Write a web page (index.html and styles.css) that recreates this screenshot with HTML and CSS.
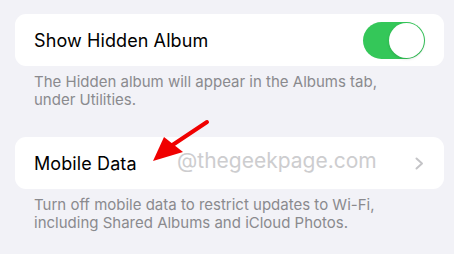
FILE: index.html
```html
<!DOCTYPE html>
<html>
<head>
<meta charset="utf-8">
<link rel="stylesheet" href="styles.css">
</head>
<body>
<div class="page">
  <div class="card">
    <span class="label">Show Hidden Album</span>
    <div class="toggle"><div class="knob"></div></div>
  </div>
  <p class="caption">The Hidden album will appear in the Albums tab,<br>under Utilities.</p>
  <div class="card card-link">
    <span class="label">Mobile Data</span>
    <span class="watermark">@thegeekpage.com</span>
    <svg class="chevron" width="9" height="13" viewBox="0 0 9 13"><path d="M1.5 1.5 L7 6.5 L1.5 11.5" fill="none" stroke="#c4c4c7" stroke-width="2" stroke-linecap="round" stroke-linejoin="round"/></svg>
  </div>
  <p class="caption">Turn off mobile data to restrict updates to Wi-Fi,<br>including Shared Albums and iCloud Photos.</p>
</div>
<svg class="arrow" width="454" height="254" viewBox="0 0 454 254">
  <line x1="207" y1="122" x2="168" y2="148" stroke="#f00000" stroke-width="4" stroke-linecap="round"/>
  <polygon points="153,161 164,137 183,152" fill="#f00000"/>
</svg>
</body>
</html>
```
FILE: styles.css
```css
html, body {
  margin: 0;
  padding: 0;
  background: #f2f2f7;
  font-family: Inter, "Noto Sans", sans-serif;
  width: 454px;
  height: 254px;
  overflow: hidden;
  position: relative;
}
.page {
  padding: 14px 10px 0 15px;
}
.card {
  background: #ffffff;
  border-radius: 11px;
  height: 52px;
  display: flex;
  align-items: center;
  padding: 0 19px 0 19px;
  position: relative;
}
.label {
  font-size: 18px;
  color: #000;
  flex: 1;
  letter-spacing: 0.1px;
}
.toggle {
  width: 62px;
  height: 37px;
  border-radius: 19px;
  background: #34c759;
  display: flex;
  align-items: center;
  justify-content: flex-end;
  padding: 0 1px;
  box-sizing: border-box;
}
.knob {
  width: 35px;
  height: 35px;
  border-radius: 50%;
  background: #fff;
  box-shadow: 0 1px 3px rgba(0,0,0,0.15);
}
.caption {
  margin: 7px 0 0 19px;
  height: 64px;
  font-size: 15px;
  line-height: 18px;
  color: #8a8a8e;
}
.card-link .chevron {
  margin-right: 1px;
}
.watermark {
  position: absolute;
  left: 162px;
  top: 11px;
  font-size: 21px;
  color: #cdcdcf;
}
.arrow {
  position: absolute;
  left: 0;
  top: 0;
}
```
